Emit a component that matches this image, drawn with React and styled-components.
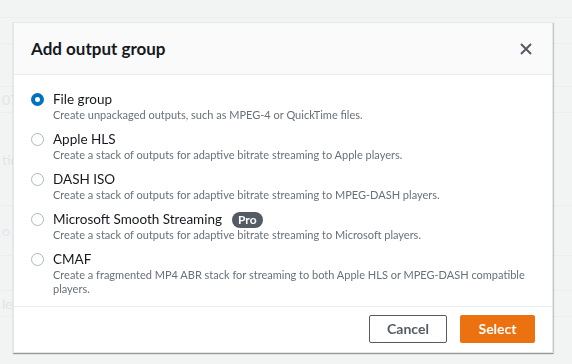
import React, { useState } from 'react';
import styled, { createGlobalStyle } from 'styled-components';

const GlobalStyle = createGlobalStyle`
	html, body {
		margin: 0;
		padding: 0;
		background: #f2f3f3;
		font-family: Lato, 'Open Sans', sans-serif;
	}
	* {
		box-sizing: border-box;
	}
`;

const Page = styled.div`
	width: 572px;
	height: 364px;
	overflow: hidden;
	display: flex;
	flex-flow: column;
	padding-top: 17px;
`;

const PageRow = styled.div`
	height: ${props => props.h}px;
	border-top: 1px solid #e4e7e7;
	display: flex;
	align-items: center;
	padding-left: 2px;
	font-size: 14px;
	color: ${props => (props.link ? '#c7dcea' : '#cfd3d3')};
`;

const Overlay = styled.div`
	position: fixed;
	inset: 0;
	background: rgba(242, 243, 243, 0.55);
	padding: 22px 0 0 13px;
`;

const Modal = styled.div`
	width: 540px;
	height: 331px;
	background: #fff;
	border: 1px solid #e4e7e7;
	box-shadow: 0 1px 1px 0 rgba(0, 28, 36, 0.3), 1px 1px 1px 0 rgba(0, 28, 36, 0.15);
	display: flex;
	flex-flow: column;
`;

const Header = styled.div`
	height: 52px;
	background: #fafafa;
	border-bottom: 1px solid #eaeded;
	display: flex;
	align-items: center;
	justify-content: space-between;
	padding: 0 18px 0 17px;
`;

const Title = styled.h2`
	margin: 0;
	font-size: 17px;
	font-weight: 700;
	color: #16191f;
`;

const CloseButton = styled.button`
	border: none;
	background: none;
	padding: 0;
	width: 16px;
	height: 16px;
	display: flex;
	align-items: center;
	justify-content: center;
	cursor: pointer;
`;

const Body = styled.div`
	flex: 1;
	padding: 16px 18px 0 17px;
	display: flex;
	flex-flow: column;
	gap: 9px;
`;

const Option = styled.label`
	display: grid;
	grid-template-columns: 22px 1fr;
	cursor: pointer;
`;

const Radio = styled.span`
	width: 13px;
	height: 13px;
	border-radius: 50%;
	margin-top: 2px;
	border: ${props => (props.checked ? '4px solid #0073bb' : '1px solid #aab7b8')};
	background: #fff;
`;

const Texts = styled.div`
	display: flex;
	flex-flow: column;
`;

const Label = styled.div`
	display: flex;
	align-items: center;
	gap: 10px;
	font-size: 13.5px;
	line-height: 17px;
	color: #16191f;
`;

const Desc = styled.div`
	font-size: 11px;
	line-height: 14px;
	color: #687078;
`;

const Badge = styled.span`
	background: #545b64;
	color: #fff;
	font-size: 12px;
	font-weight: 700;
	line-height: 16px;
	padding: 0 6px;
	border-radius: 8px;
`;

const Footer = styled.div`
	height: 46px;
	border-top: 1px solid #eaeded;
	display: flex;
	justify-content: flex-end;
	align-items: center;
	gap: 13px;
	padding: 0 17px 2px 0;
`;

const Button = styled.button`
	height: 28px;
	padding: 0;
	width: ${props => (props.primary ? '75px' : '78px')};
	border-radius: 2px;
	font-family: inherit;
	font-size: 14px;
	font-weight: 700;
	border: 1px solid ${props => (props.primary ? '#ec7211' : '#545b64')};
	background: ${props => (props.primary ? '#ec7211' : '#fff')};
	color: ${props => (props.primary ? '#fff' : '#545b64')};
	cursor: pointer;
`;

const options = [
	{ id: 'file', label: 'File group', desc: 'Create unpackaged outputs, such as MPEG-4 or QuickTime files.' },
	{ id: 'hls', label: 'Apple HLS', desc: 'Create a stack of outputs for adaptive bitrate streaming to Apple players.' },
	{ id: 'dash', label: 'DASH ISO', desc: 'Create a stack of outputs for adaptive bitrate streaming to MPEG-DASH players.' },
	{
		id: 'mss',
		label: 'Microsoft Smooth Streaming',
		pro: true,
		desc: 'Create a stack of outputs for adaptive bitrate streaming to Microsoft players.',
	},
	{
		id: 'cmaf',
		label: 'CMAF',
		desc: 'Create a fragmented MP4 ABR stack for streaming to both Apple HLS or MPEG-DASH compatible players.',
	},
];

const backRows = [
	{ h: 26, text: '' },
	{ h: 43, text: '' },
	{ h: 26, text: '07' },
	{ h: 93, text: 'tio' },
	{ h: 50, text: 'o', link: true },
	{ h: 35, text: '' },
	{ h: 26, text: 'le' },
	{ h: 30, text: '' },
];

export default function App() {
	const [selected, setSelected] = useState('file');
	return (
		<>
			<GlobalStyle />
			<Page>
				{backRows.map((r, i) => (
					<PageRow key={i} h={r.h} link={r.link}>
						{r.text}
					</PageRow>
				))}
			</Page>
			<Overlay>
				<Modal>
					<Header>
						<Title>Add output group</Title>
						<CloseButton aria-label="Close">
							<svg width="12" height="12" viewBox="0 0 12 12">
								<path d="M1 1 L11 11 M11 1 L1 11" stroke="#545b64" strokeWidth="2" fill="none" />
							</svg>
						</CloseButton>
					</Header>
					<Body>
						{options.map(o => (
							<Option key={o.id} onClick={() => setSelected(o.id)}>
								<Radio checked={selected === o.id} />
								<Texts>
									<Label>
										{o.label}
										{o.pro && <Badge>Pro</Badge>}
									</Label>
									<Desc>{o.desc}</Desc>
								</Texts>
							</Option>
						))}
					</Body>
					<Footer>
						<Button>Cancel</Button>
						<Button primary>Select</Button>
					</Footer>
				</Modal>
			</Overlay>
		</>
	);
}
